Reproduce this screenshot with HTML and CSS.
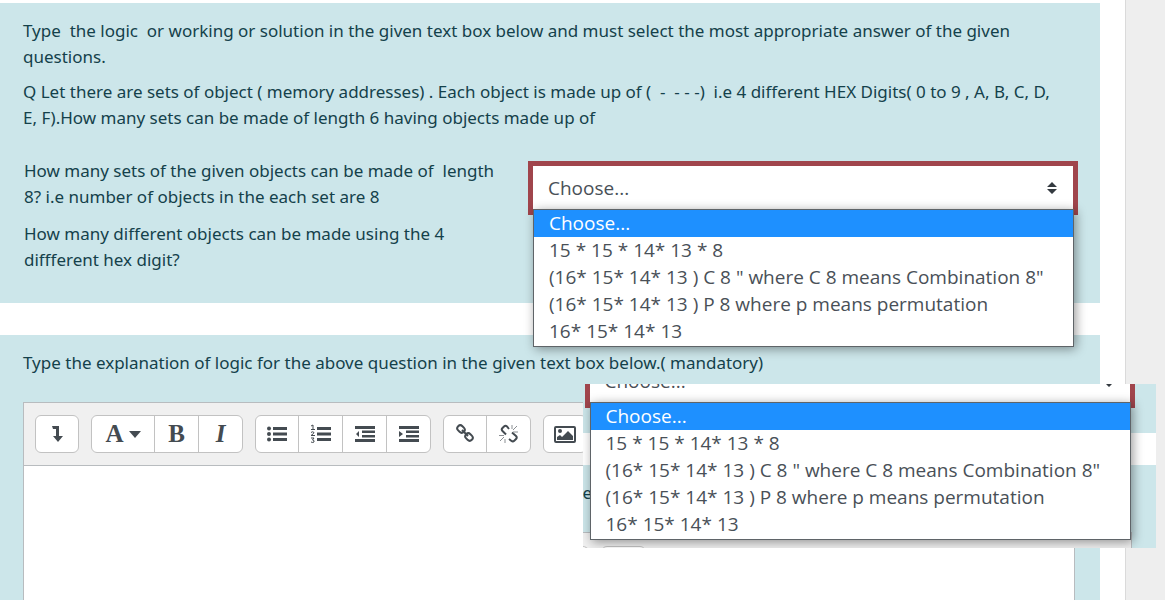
FILE: index.html
```
<!DOCTYPE html>
<html lang="en">
<head>
    <meta charset="UTF-8">
    <meta name="viewport" content="width=device-width, initial-scale=1.0">
    <title>Quiz</title>
    <link rel="stylesheet" href="styles.css">
</head>
<body>
    <div class="page">
        <main class="content">
            <section class="question">
                <p>Type&nbsp; the logic&nbsp; or working or solution in the given text box below and must select the most appropriate answer of the given questions.</p>
                <p>Q Let there are sets of object ( memory addresses) . Each object is made up of (&nbsp; -&nbsp; - - -)&nbsp; i.e 4 different HEX Digits( 0 to 9 , A, B, C, D, E, F).How many sets can be made of length 6 having objects made up of</p>
                <table class="answers">
                    <tr>
                        <td class="text"><label for="answer1">How many sets of the given objects can be made of&nbsp; length 8? i.e number of objects in the each set are 8</label></td>
                        <td class="control">
                            <div class="picker">
                                <select id="answer1">
                                    <option>Choose...</option>
                                </select>
                                <svg class="arrows" width="10" height="12" viewBox="0 0 10 12"><path d="M5 0l5 5H0zM5 12l5-5H0z"/></svg>
                                <ul class="options" role="listbox" aria-label="Answers">
                                    <li role="option" aria-selected="true" class="selected">Choose...</li>
                                    <li role="option">15 * 15 * 14* 13 * 8</li>
                                    <li role="option">(16* 15* 14* 13 ) C 8 " where C 8 means Combination 8"</li>
                                    <li role="option">(16* 15* 14* 13 ) P 8 where p means permutation</li>
                                    <li role="option">16* 15* 14* 13</li>
                                </ul>
                            </div>
                        </td>
                    </tr>
                    <tr>
                        <td class="text">How many different objects can be made using the 4 diffferent hex digit?</td>
                        <td></td>
                    </tr>
                </table>
            </section>

            <section class="question essay">
                <label for="explanation">Type the explanation of logic for the above question in the given text box below.( mandatory)</label>
                <div class="editor">
                    <div class="toolbar">
                        <div class="group">
                            <button type="button" aria-label="Show more buttons"><svg width="12" height="18" viewBox="0 0 12 18"><path d="M1 1h7v10h4l-5 6-5-6h3V4H2z"/></svg></button>
                        </div>
                        <div class="group">
                            <button type="button" class="letter styles" aria-label="Paragraph styles">A<svg width="12" height="7" viewBox="0 0 12 7"><path d="M0 0h12L6 7z"/></svg></button>
                            <button type="button" class="letter" aria-label="Bold">B</button>
                            <button type="button" class="letter italic" aria-label="Italic">I</button>
                        </div>
                        <div class="group">
                            <button type="button" aria-label="Unordered list"><svg width="20" height="16" viewBox="0 0 20 16"><circle cx="2" cy="2.500" r="2"/><circle cx="2" cy="8" r="2"/><circle cx="2" cy="13.500" r="2"/><path d="M6 1h14v3H6zM6 6.500h14v3H6zM6 12h14v3H6z"/></svg></button>
                            <button type="button" aria-label="Ordered list"><svg width="20" height="20" viewBox="0 0 20 20"><path d="M6 3h14v3H6zM6 8.500h14v3H6zM6 14h14v3H6z"/><path class="line thin" d="M0 2l2-1v4M0 5.500h4M0 8.500q1.500-1.500 3 0 0 1-3 3h4M0 14h3l-1.500 2q2 0 1.500 2-1 1-3 0"/></svg></button>
                            <button type="button" aria-label="Outdent"><svg width="20" height="16" viewBox="0 0 20 16"><path d="M0 0h20v3H0zM7 4.500h13v2.500H7zM7 9h13v2.500H7zM0 13h20v3H0zM4 5v6L1 8z"/></svg></button>
                            <button type="button" aria-label="Indent"><svg width="20" height="16" viewBox="0 0 20 16"><path d="M0 0h20v3H0zM7 4.500h13v2.500H7zM7 9h13v2.500H7zM0 13h20v3H0zM0 5v6l4-3z"/></svg></button>
                        </div>
                        <div class="group">
                            <button type="button" aria-label="Link"><svg width="20" height="20" viewBox="0 0 20 20"><g class="line"><rect x="-4" y="-3" width="8" height="6" rx="3" transform="translate(6 5) rotate(45)"/><rect x="-4" y="-3" width="8" height="6" rx="3" transform="translate(14 13) rotate(45)"/><path d="M7 6l6 6"/></g></svg></button>
                            <button type="button" aria-label="Unlink"><svg width="20" height="20" viewBox="0 0 20 20"><path class="line" d="M10 5L8 2.500Q6.500 1 5 2.500L3.500 4Q2 5.500 3.500 7L7 10.500M10 15l2.500 2q1.500 1 3-.5l1.500-1.500q1.500-1.500 0-3L13 8.500"/><path class="line hair" d="M13 1v4M18 2l-4 4M19 8h-5M6 15v4M5 13l-4 4M5 11.500H0"/></svg></button>
                        </div>
                        <div class="group">
                            <button type="button" aria-label="Image"><svg width="22" height="17" viewBox="0 0 22 17"><rect class="line" x="1" y="1" width="20" height="15" rx="1"/><circle cx="6" cy="5" r="2"/><path d="M3 14v-3l3-2 2 2 6-6 5 5v4z"/></svg></button>
                        </div>
                    </div>
                    <textarea id="explanation"></textarea>
                </div>
            </section>
        </main>
        <aside class="sidebar"></aside>

        <div class="overlay">
            <div class="strip first"></div>
            <div class="strip second">e</div>
            <div class="strip tools">
                <div class="bar">
                    <span class="tab short"></span>
                    <span class="tab"></span>
                </div>
            </div>
            <div class="picker">
                <select aria-label="Second answer">
                    <option>Choose...</option>
                </select>
                <svg class="arrows" width="10" height="12" viewBox="0 0 10 12"><path d="M5 0l5 5H0zM5 12l5-5H0z"/></svg>
                <ul class="options" role="listbox" aria-label="Second answers">
                    <li role="option" aria-selected="true" class="selected">Choose...</li>
                    <li role="option">15 * 15 * 14* 13 * 8</li>
                    <li role="option">(16* 15* 14* 13 ) C 8 " where C 8 means Combination 8"</li>
                    <li role="option">(16* 15* 14* 13 ) P 8 where p means permutation</li>
                    <li role="option">16* 15* 14* 13</li>
                </ul>
            </div>
        </div>
    </div>
</body>
</html>
```

FILE: styles.css
```
* {
    box-sizing: border-box;
}

body {
    margin: 0;
    height: 100vh;
    overflow: hidden;
    background-color: #ffffff;
    color: #14414b;
    font-family: "Noto Sans", Arial, sans-serif;
    font-size: 17px;
    line-height: 26px;
}

.page {
    position: relative;
    display: flex;
    height: 100%;
    overflow: hidden;
}

.content {
    flex: 1;
    min-width: 0;
    margin-right: 25px;
    padding-top: 3px;
    display: flex;
    flex-direction: column;
    gap: 32px;
}

.sidebar {
    width: 40px;
    background-color: #eeeeee;
    border-left: 1px solid #dadada;
}

.question {
    background-color: #cce6ea;
    padding: 15px 22px 30px 23px;
}

.question p {
    margin: 0 0 9px;
    padding-right: 16px;
}

.answers {
    width: 100%;
    table-layout: fixed;
    border-collapse: collapse;
    margin-top: 27px;
}

.answers td {
    padding: 0;
    vertical-align: top;
}

.answers .text {
    width: 505px;
    padding: 0 20px 0 1px;
}

.answers .control {
    padding: 3px 0 6px;
}

/* drop-down with its open list */
.picker {
    position: relative;
    border: 5px solid #a0454c;
}

.picker select {
    display: block;
    width: 100%;
    height: 44px;
    padding: 0 15px;
    border: 0;
    appearance: none;
    background-color: #ffffff;
    color: #495057;
    font-family: "Open Sans", Arial, sans-serif;
    font-size: 19px;
}

.arrows {
    position: absolute;
    top: 16px;
    right: 16px;
    fill: #343a40;
}

.options {
    position: absolute;
    z-index: 1;
    top: 43px;
    left: 0;
    right: -1px;
    margin: 0;
    padding: 0 0 1px;
    list-style: none;
    background-color: #ffffff;
    border: 1px solid #5f6468;
    box-shadow: 2px 2px 10px rgba(0, 0, 0, 0.4);
    color: #495057;
    font-family: "Open Sans", Arial, sans-serif;
    font-size: 19px;
    line-height: 27px;
}

.options li {
    padding: 0 15px;
    white-space: nowrap;
}

.options .selected {
    background-color: #1e90ff;
    color: #ffffff;
}

/* text editor */
.essay {
    flex: 1;
    display: flex;
    flex-direction: column;
    padding-bottom: 0;
}

.editor {
    flex: 1;
    display: flex;
    flex-direction: column;
    margin: 26px 3px 0 0;
    border: 1px solid #b8bcbf;
    border-bottom: 0;
    background-color: #ffffff;
}

.toolbar {
    display: flex;
    gap: 12px;
    padding: 12px 11px;
    background-color: #f0f0f0;
    border-bottom: 1px solid #b8bcbf;
}

.group {
    display: flex;
    border: 1px solid #c2c2c2;
    border-radius: 6px;
    background-color: #ffffff;
    overflow: hidden;
}

.group button {
    display: flex;
    align-items: center;
    justify-content: center;
    width: 42px;
    height: 36px;
    padding: 0;
    border: 0;
    background: none;
    color: #444b51;
}

.group button + button {
    width: 44px;
    border-left: 1px solid #c2c2c2;
}

.group svg {
    fill: #444b51;
}

.group .letter {
    font-family: "Liberation Serif", serif;
    font-weight: bold;
    font-size: 25px;
}

.group .styles {
    width: 62px;
    gap: 5px;
}

.group .italic {
    font-style: italic;
}

.group .line {
    fill: none;
    stroke: #444b51;
    stroke-width: 2;
}

.group .thin {
    stroke-width: 1;
}

.group .hair {
    stroke: #8a8f93;
    stroke-width: 1;
}

.editor textarea {
    flex: 1;
    border: 0;
    resize: none;
    font: inherit;
}

/* second open list, lying over the page */
.overlay {
    position: absolute;
    top: 384px;
    left: 50%;
    right: 9px;
    height: 164px;
    overflow: hidden;
    background-color: #ffffff;
}

.overlay .picker {
    position: absolute;
    top: -30px;
    left: 2px;
    right: 21px;
}

.strip {
    background-color: #cce6ea;
}

.first {
    height: 49px;
    margin-bottom: 32px;
}

.second {
    height: 67px;
    padding-top: 15px;
}

.tools {
    height: 16px;
    padding-right: 24px;
}

.bar {
    display: flex;
    gap: 12px;
    height: 16px;
    padding-top: 13px;
    background-color: #f0f0f0;
    border-top: 1px solid #b8bcbf;
    border-right: 1px solid #b8bcbf;
}

.tab {
    width: 45px;
    height: 38px;
    background-color: #ffffff;
    border: 1px solid #c2c2c2;
    border-radius: 6px;
}

.short {
    width: 6px;
    border-left: 0;
    border-radius: 0 6px 0 0;
}
```
